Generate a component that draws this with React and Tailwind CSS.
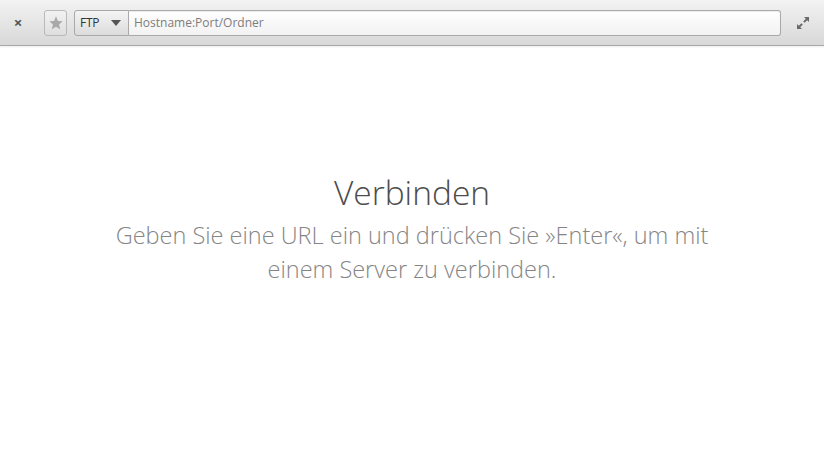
import React from "react";

function Star() {
  return (
    <svg width="16" height="16" viewBox="0 0 24 24">
      <path
        d="M12 2l2.9 6.9 7.1.6-5.4 4.7 1.7 7.3L12 17.6 5.7 21.5l1.7-7.3L2 9.5l7.1-.6z"
        fill="#a9a9a9"
      />
    </svg>
  );
}

function Expand() {
  return (
    <svg width="12" height="12" viewBox="0 0 12 12">
      <path d="M7 0h5v5l-1.8-1.8L7.6 5.8 6.2 4.4 8.8 1.8z" fill="#6a6a6a" />
      <path d="M5 12H0V7l1.8 1.8 2.6-2.6 1.4 1.4-2.6 2.6z" fill="#6a6a6a" />
    </svg>
  );
}

export default function App() {
  return (
    <div
      className="w-[824px] h-[450px] bg-white flex flex-col"
      style={{ fontFamily: "'Open Sans', sans-serif" }}
    >
      {/* header bar */}
      <div className="h-[46px] flex items-center bg-gradient-to-b from-[#f3f3f3] to-[#d8d8d8] border-b border-[#a8a8a8] shadow-[0_1px_2px_rgba(0,0,0,0.08)]">
        <div className="w-[36px] flex justify-center text-[#555] text-[15px] font-bold leading-none">
          ×
        </div>
        <div className="ml-[8px] w-[23px] h-[26px] rounded-[3px] border border-[#b9b9b9] bg-gradient-to-b from-[#f2f2f2] to-[#dedede] flex items-center justify-center">
          <Star />
        </div>
        <div className="ml-[7px] flex h-[26px] flex-1">
          <div className="w-[55px] rounded-l-[3px] border border-[#a9a9a9] bg-gradient-to-b from-[#f4f4f4] to-[#dcdcdc] flex items-center pl-[5px] gap-[12px]">
            <span className="text-[12px] text-[#333] tracking-[-0.3px]">FTP</span>
            <svg width="10" height="6" viewBox="0 0 10 6">
              <path d="M0 0h10L5 6z" fill="#555" />
            </svg>
          </div>
          <div className="flex-1 rounded-r-[3px] border border-l-0 border-[#a9a9a9] bg-gradient-to-b from-[#ffffff] to-[#f2f2f2] flex items-center px-[5px] shadow-[inset_0_1px_1px_rgba(0,0,0,0.08)]">
            <span className="text-[12px] text-[#7d7d7d]">Hostname:Port/Ordner</span>
          </div>
        </div>
        <div className="w-[43px] flex justify-center">
          <Expand />
        </div>
      </div>

      {/* welcome */}
      <div className="flex-1 flex flex-col items-center pt-[121px]">
        <h1 className="text-[33.5px] font-light text-[#4d4d4d] leading-[50px]">Verbinden</h1>
        <p className="mt-[1px] w-[620px] text-center text-[23.5px] font-light text-[#858585] leading-[34px]">
          Geben Sie eine URL ein und drücken Sie »Enter«, um mit einem Server zu verbinden.
        </p>
      </div>
    </div>
  );
}
